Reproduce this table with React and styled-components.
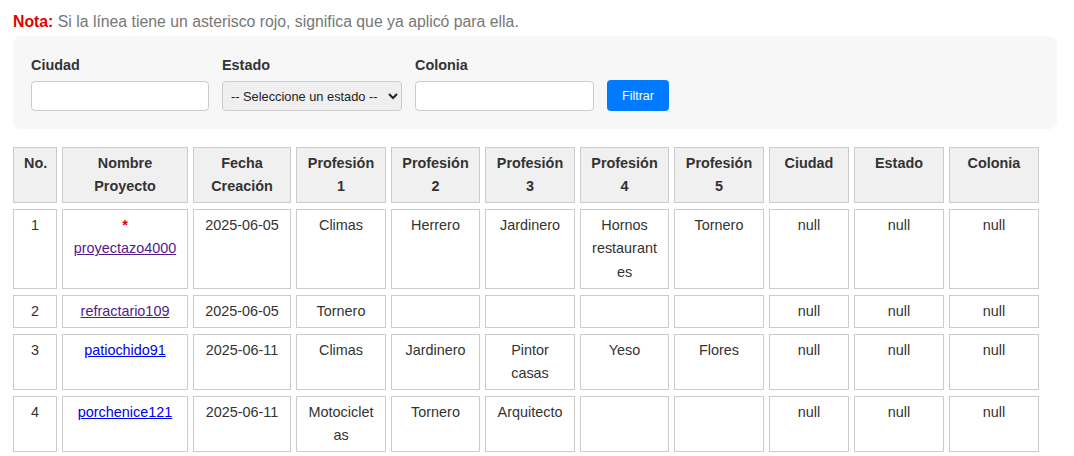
import React from 'react';
import styled, { createGlobalStyle } from 'styled-components';

const GlobalStyle = createGlobalStyle`
  body {
    margin: 8px;
    background: #fff;
    font-family: "Liberation Sans", Arial, sans-serif;
    line-height: 1.6;
    color: #333;
  }
`;

const Top = styled.div`
  padding: 1px 9px 0 5px;
`;

const Note = styled.p`
  margin: 0 0 2px;
  font-size: 15.8px;
  color: #777;
`;

const NoteLabel = styled.strong`
  color: #e00000;
`;

const FilterPanel = styled.div`
  display: flex;
  align-items: flex-end;
  gap: 13px;
  padding: 18px;
  background: #f7f7f7;
  border-radius: 8px;
`;

const Field = styled.div`
  display: flex;
  flex-direction: column;
`;

const Label = styled.label`
  font-size: 14.4px;
  font-weight: bold;
  color: #333;
  margin-bottom: 4px;
`;

const TextInput = styled.input`
  box-sizing: border-box;
  width: ${(props) => props.$width}px;
  height: 30px;
  padding: 4px 8px;
  border: 1px solid #ccc;
  border-radius: 4px;
  background: #fff;
  font-family: "Liberation Sans", Arial, sans-serif;
  font-size: 13.33px;
`;

const Select = styled.select`
  box-sizing: border-box;
  width: 180px;
  height: 30px;
  padding: 2px 4px;
  border: 1px solid #ccc;
  border-radius: 4px;
  background: #efefef;
  color: #222;
  font-family: "Liberation Sans", Arial, sans-serif;
  font-size: 12.8px;
`;

const Button = styled.button`
  box-sizing: border-box;
  height: 31px;
  padding: 0 15px;
  border: none;
  border-radius: 4px;
  background: #007bff;
  color: #fff;
  font-family: "Liberation Sans", Arial, sans-serif;
  font-size: 12.5px;
  cursor: pointer;
`;

const Table = styled.table`
  margin-top: 12px;
  width: 1036px;
  table-layout: fixed;
  border-collapse: separate;
  border-spacing: 5px 6px;
  font-size: 14.4px;
  line-height: 1.6;
`;

const Th = styled.th`
  box-sizing: border-box;
  width: ${(props) => props.$width}px;
  padding: 4px 10px;
  border: 1px solid #ccc;
  background: #f0f0f0;
  color: #333;
  font-weight: bold;
  text-align: center;
  vertical-align: top;
`;

const Td = styled.td`
  padding: 4px 10px;
  border: 1px solid #ccc;
  color: #333;
  text-align: center;
  vertical-align: top;
  overflow-wrap: break-word;
`;

const Asterisk = styled.span`
  display: block;
  color: #e00000;
  font-weight: bold;
`;

const ProjectLink = styled.a`
  color: ${(props) => (props.$visited ? '#551a8b' : '#0000ee')};
  text-decoration: underline;
`;

const columns = [
  { label: ['No.'], width: 44 },
  { label: ['Nombre', 'Proyecto'], width: 126 },
  { label: ['Fecha', 'Creación'], width: 98 },
  { label: ['Profesión', '1'], width: 90 },
  { label: ['Profesión', '2'], width: 89 },
  { label: ['Profesión', '3'], width: 90 },
  { label: ['Profesión', '4'], width: 89 },
  { label: ['Profesión', '5'], width: 90 },
  { label: ['Ciudad'], width: 80 },
  { label: ['Estado'], width: 90 },
  { label: ['Colonia'], width: 90 },
];

const rows = [
  {
    no: 1,
    name: 'proyectazo4000',
    applied: true,
    visited: true,
    date: '2025-06-05',
    profs: ['Climas', 'Herrero', 'Jardinero', 'Hornos restaurantes', 'Tornero'],
  },
  {
    no: 2,
    name: 'refractario109',
    visited: true,
    date: '2025-06-05',
    profs: ['Tornero', '', '', '', ''],
  },
  {
    no: 3,
    name: 'patiochido91',
    date: '2025-06-11',
    profs: ['Climas', 'Jardinero', 'Pintor casas', 'Yeso', 'Flores'],
  },
  {
    no: 4,
    name: 'porchenice121',
    date: '2025-06-11',
    profs: ['Motocicletas', 'Tornero', 'Arquitecto', '', ''],
  },
];

const App = () => (
  <>
    <GlobalStyle />
    <Top>
      <Note>
        <NoteLabel>Nota:</NoteLabel> Si la línea tiene un asterisco rojo, significa que ya aplicó para ella.
      </Note>
      <FilterPanel>
        <Field>
          <Label>Ciudad</Label>
          <TextInput $width={178} />
        </Field>
        <Field>
          <Label>Estado</Label>
          <Select defaultValue="">
            <option value="">-- Seleccione un estado --</option>
          </Select>
        </Field>
        <Field>
          <Label>Colonia</Label>
          <TextInput $width={179} />
        </Field>
        <Button>Filtrar</Button>
      </FilterPanel>
    </Top>
    <Table>
      <thead>
        <tr>
          {columns.map((col, i) => (
            <Th key={i} $width={col.width}>
              {col.label.map((line, j) => (
                <React.Fragment key={j}>
                  {j > 0 && <br />}
                  {line}
                </React.Fragment>
              ))}
            </Th>
          ))}
        </tr>
      </thead>
      <tbody>
        {rows.map((row) => (
          <tr key={row.no}>
            <Td>{row.no}</Td>
            <Td>
              {row.applied && <Asterisk>*</Asterisk>}
              <ProjectLink href="#" $visited={row.visited}>
                {row.name}
              </ProjectLink>
            </Td>
            <Td>{row.date}</Td>
            {row.profs.map((p, i) => (
              <Td key={i}>{p}</Td>
            ))}
            <Td>null</Td>
            <Td>null</Td>
            <Td>null</Td>
          </tr>
        ))}
      </tbody>
    </Table>
  </>
);

export default App;
